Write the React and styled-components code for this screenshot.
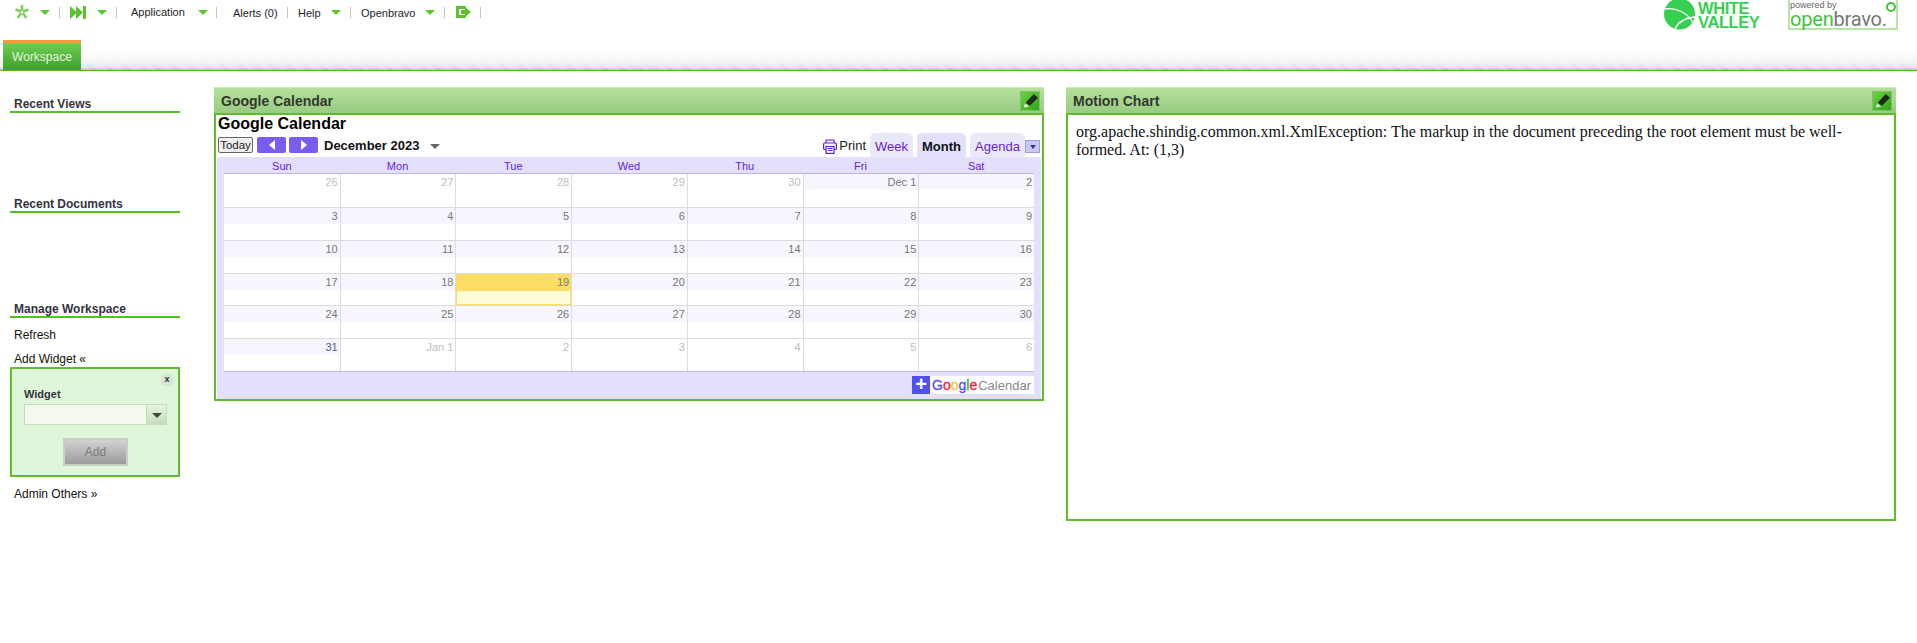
import styled, { createGlobalStyle } from "styled-components"

const GlobalStyle = createGlobalStyle`
    html, body {
        margin: 0;
        padding: 0;
        background: white;
        font-family: "Liberation Sans", Arial, sans-serif;
        font-size: 12px;
    }
`

const Page = styled.div`
    width: 1917px;
    height: 643px;
    overflow: hidden;
`

// top navigation
const Header = styled.div`
    height: 70px;
    position: relative;
    border-bottom: 1px solid #55bb2b;
`
const TopBar = styled.div`
    display: flex;
    align-items: center;
    height: 24px;
`
const MenuItem = styled.div`
    display: flex;
    align-items: center;
    height: 24px;
    width: ${props => props.$width}px;
    padding-left: ${props => props.$pad}px;
    box-sizing: border-box;
    color: #1e1e2a;
    font-size: 11px;
    flex: none;
`
const MenuLabel = styled.span`
    width: ${props => props.$width}px;
    flex: none;
    white-space: nowrap;
    position: relative;
    top: ${props => props.$raised ? "0" : "1px"};
`
const ArrowDown = styled.span`
    display: block;
    flex: none;
    margin-left: ${props => props.$gap}px;
    width: 0;
    height: 0;
    border-left: 5px solid transparent;
    border-right: 5px solid transparent;
    border-top: 5px solid #5bc52a;
`
const Sep = styled.span`
    width: 1px;
    height: 11px;
    background: #c4c4c4;
    flex: none;
`
const TabStrip = styled.div`
    position: absolute;
    left: 0;
    right: 0;
    bottom: 0;
    height: 30px;
    padding-left: 3px;
    box-sizing: border-box;
    display: flex;
    background:
        repeating-linear-gradient(45deg, rgba(255,255,255,.45) 0 1px, transparent 1px 2px),
        linear-gradient(to bottom, #ffffff 0%, #ffffff 40%, #f0f0f0 75%, #dcdcdc 92%, #a8a8a8 100%);
`
const Tab = styled.div`
    width: 78px;
    height: 30px;
    box-sizing: border-box;
    border-top: 4px solid #f59a3c;
    background: linear-gradient(to bottom, #6ccc52, #3f9e2c);
    color: #e6f7dd;
    font-size: 12px;
    line-height: 27px;
    text-align: center;
`
const Logos = styled.div`
    position: absolute;
    top: 0;
    left: 1664px;
    display: flex;
    gap: 29px;
`
const ValleyLogo = styled.div`
    display: flex;
    align-items: flex-start;
    gap: 3px;
    width: 95px;
    height: 30px;
`
const GlobeSvg = styled.svg`
    flex: none;
    display: block;
`
const ValleyText = styled.div`
    color: #36cf52;
    font-size: 16.5px;
    font-weight: bold;
    line-height: 14px;
    margin-top: 1px;
    letter-spacing: -.4px;
    white-space: nowrap;
`
const BravoBox = styled.div`
    width: 110px;
    height: 30px;
    box-sizing: border-box;
    border: 2px solid #b5e6a8;
    border-top: 0;
    position: relative;
`
const Powered = styled.div`
    font-size: 9px;
    color: #666;
    line-height: 10px;
`
const BravoWord = styled.div`
    font-family: Roboto, sans-serif;
    font-size: 20px;
    line-height: 18px;
    letter-spacing: -.2px;
    color: #777;
    white-space: nowrap;
`
const BravoGreen = styled.span`
    color: #3fc33f;
`
const BravoDot = styled.span`
    position: absolute;
    right: 0;
    top: 2px;
    width: 6px;
    height: 6px;
    border: 2px solid #3fc33f;
    border-radius: 50%;
`

// body
const Body = styled.div`
    display: flex;
`
const Sidebar = styled.div`
    width: 170px;
    margin-left: 10px;
    margin-right: 34px;
    padding-top: 26px;
    flex: none;
`
const SideSection = styled.div`
    height: ${props => props.$height ? props.$height + "px" : "auto"};
`
const SideHeading = styled.div`
    font-size: 12px;
    font-weight: bold;
    color: #33333d;
    line-height: 14px;
    padding-left: 4px;
    border-bottom: 2px solid #55bf26;
`
const SideLink = styled.div`
    font-size: 12px;
    color: #111;
    line-height: 14px;
    padding-left: 4px;
    margin-top: ${props => props.$top}px;
`
const AddBox = styled.div`
    height: 110px;
    margin-top: 1px;
    box-sizing: border-box;
    border: 2px solid #63bb2f;
    background: #e0f6db;
    position: relative;
    padding: 19px 11px 0 12px;
`
const CloseBtn = styled.div`
    position: absolute;
    top: 5px;
    right: 5px;
    width: 12px;
    height: 12px;
    border-radius: 3px;
    background: #d8e8d4;
    color: #333;
    font-size: 9px;
    font-weight: bold;
    line-height: 11px;
    text-align: center;
`
const FieldLabel = styled.div`
    font-size: 11px;
    font-weight: bold;
    color: #33333d;
    line-height: 13px;
`
const SelectBox = styled.div`
    display: flex;
    height: 21px;
    margin-top: 3px;
    box-sizing: border-box;
    border: 1px solid #c0dcb8;
    background: #f2f9ef;
`
const SelectFill = styled.div`
    flex: 1;
`
const SelectBtn = styled.div`
    width: 19px;
    border-left: 1px solid #c0dcb8;
    background: linear-gradient(to bottom, #e6f3e0, #c9dcbc);
    display: flex;
    align-items: center;
    justify-content: center;
`
const SelectArrow = styled.span`
    width: 0;
    height: 0;
    margin-top: 2px;
    border-left: 5px solid transparent;
    border-right: 5px solid transparent;
    border-top: 5px solid #3c4a38;
`
const AddBtn = styled.div`
    width: 65px;
    height: 28px;
    margin: 13px auto 0;
    box-sizing: border-box;
    border: 2px solid #c6cfc3;
    background: linear-gradient(to bottom, #d2d2d2, #9c9c9c);
    color: #7c7c7c;
    font-size: 12px;
    line-height: 24px;
    text-align: center;
`

const Main = styled.div`
    display: flex;
    gap: 22px;
    margin-top: 16px;
`
const Widget = styled.div`
    width: 830px;
    flex: none;
`
const WidgetHead = styled.div`
    height: 26px;
    box-sizing: border-box;
    background: linear-gradient(to bottom, #b4e09c, #99cb80);
    border-top: 1px solid #c9e8b8;
    display: flex;
    align-items: center;
    justify-content: space-between;
    padding: 0 4px 0 7px;
    color: #33382f;
    font-size: 14px;
    font-weight: bold;
`
const EditBtn = styled.div`
    width: 20px;
    height: 20px;
    box-sizing: border-box;
    border: 1px solid #85bd78;
    background: linear-gradient(135deg, #6fd148, #2fa810);
    display: flex;
    align-items: center;
    justify-content: center;
`
const WidgetBody = styled.div`
    height: ${props => props.$height}px;
    box-sizing: border-box;
    border: 2px solid #63bb2f;
    background: white;
`
const ErrorText = styled.div`
    font-family: "Liberation Serif", "Times New Roman", serif;
    font-size: 16px;
    line-height: 18px;
    color: #111;
    padding: 8px;
`

// calendar
const CalTitle = styled.div`
    font-size: 16px;
    font-weight: bold;
    color: #000;
    line-height: 17px;
    padding-left: 2px;
`
const CalNav = styled.div`
    display: flex;
    align-items: flex-end;
    height: 25px;
    padding: 0 2px 0 2px;
`
const TodayBtn = styled.div`
    width: 35px;
    height: 16px;
    box-sizing: border-box;
    border: 1px solid #666;
    border-radius: 2px;
    background: #f0f0f0;
    color: #222;
    font-size: 11.5px;
    line-height: 14px;
    text-align: center;
    margin-bottom: 4px;
`
const NavBtn = styled.div`
    width: 29px;
    height: 16px;
    border-radius: 2px;
    background: #7b5cf0;
    margin: 0 0 4px ${props => props.$left}px;
    display: flex;
    align-items: center;
    justify-content: center;
`
const NavArrow = styled.span`
    width: 0;
    height: 0;
    border-top: 5px solid transparent;
    border-bottom: 5px solid transparent;
    border-left: ${props => props.$right ? "6px solid #fff" : "0"};
    border-right: ${props => props.$right ? "0" : "6px solid #fff"};
`
const MonthLabel = styled.div`
    font-size: 13px;
    font-weight: bold;
    color: #111;
    margin: 0 0 3px 6px;
    line-height: 16px;
`
const MonthArrow = styled.span`
    width: 0;
    height: 0;
    margin: 0 0 8px 11px;
    border-left: 5px solid transparent;
    border-right: 5px solid transparent;
    border-top: 5px solid #666;
`
const NavRight = styled.div`
    margin-left: auto;
    display: flex;
    align-items: flex-end;
`
const PrintBtn = styled.div`
    display: flex;
    align-items: center;
    gap: 2px;
    color: #222;
    font-size: 13px;
    line-height: 16px;
    margin: 0 4px 3px 0;
`
const ViewTab = styled.div`
    height: 24px;
    box-sizing: border-box;
    width: ${props => props.$width}px;
    margin-left: ${props => props.$left}px;
    border-radius: 5px 5px 0 0;
    background: ${props => props.$active ? "#e3e0fd" : "#e9e9f8"};
    color: ${props => props.$active ? "#111" : "#6a1bd8"};
    font-weight: ${props => props.$active ? "bold" : "normal"};
    font-size: 13px;
    line-height: 28px;
    text-align: center;
`
const TabMenu = styled.div`
    width: 15px;
    height: 13px;
    box-sizing: border-box;
    margin: 0 0 4px 0;
    border: 1px solid #9c9ce0;
    background: #c8c8f4;
    display: flex;
    align-items: center;
    justify-content: center;
`
const TabMenuArrow = styled.span`
    width: 0;
    height: 0;
    border-left: 3px solid transparent;
    border-right: 3px solid transparent;
    border-top: 4px solid #3c2aa0;
`
const CalFrame = styled.div`
    margin-left: 1px;
    width: 824px;
    border-radius: 3px 3px 0 0;
    background: #e3e0fd;
    padding: 0 7px;
    box-sizing: border-box;
    height: 242px;
`
const DayNames = styled.div`
    display: grid;
    grid-template-columns: repeat(7, 1fr);
    height: 16px;
    border-bottom: 1px solid #bcb6f0;
`
const DayName = styled.div`
    text-align: center;
    font-size: 11px;
    line-height: 18px;
    color: #6a1bd8;
`
const Week = styled.div`
    display: grid;
    grid-template-columns: repeat(7, 1fr);
    height: ${props => props.$height}px;
    box-sizing: border-box;
    background: white;
    border-bottom: ${props => props.$last ? "1px solid #bcb6f0" : "1px solid #dcdcdc"};
`
const Cell = styled.div`
    border-left: ${props => props.$first ? "0" : "1px solid #dcdcdc"};
    background: ${props => props.$today ? "#fdfdd8" : "white"};
    box-shadow: ${props => props.$today ? "inset 0 0 0 1px #fadf64" : "none"};
`
const DateLabel = styled.div`
    height: ${props => props.$today ? 17 : 16}px;
    background: ${props => props.$today ? "#fadf64" : props.$out ? "transparent" : "#f7f6fe"};
    color: ${props => props.$out ? "#bdbdbd" : props.$blue ? "#4a5a9a" : "#777"};
    font-size: 11px;
    line-height: 16px;
    text-align: right;
    padding-right: 2px;
`
const CalFooter = styled.div`
    display: flex;
    justify-content: flex-end;
    padding-top: 4px;
`
const PlusSquare = styled.div`
    width: 18px;
    height: 18px;
    background: #5050f0;
    color: white;
    font-size: 20px;
    font-weight: bold;
    line-height: 17px;
    text-align: center;
`
const GoogleBadge = styled.div`
    width: 104px;
    height: 18px;
    background: white;
    font-size: 13px;
    line-height: 18px;
    color: #888;
    padding-left: 2px;
    box-sizing: border-box;
    white-space: nowrap;
`
const GoogleWord = styled.span`
    font-size: 14px;
    -webkit-text-stroke: .3px;
    margin-right: 1px;
`
const Letter = styled.span`
    color: ${props => props.$color};
`

const days = ["Sun", "Mon", "Tue", "Wed", "Thu", "Fri", "Sat"]

const weeks = [
    ["26", "27", "28", "29", "30", "Dec 1", "2"],
    ["3", "4", "5", "6", "7", "8", "9"],
    ["10", "11", "12", "13", "14", "15", "16"],
    ["17", "18", "19", "20", "21", "22", "23"],
    ["24", "25", "26", "27", "28", "29", "30"],
    ["31", "Jan 1", "2", "3", "4", "5", "6"],
]

const weekHeights = [34, 33, 33, 32, 33, 33]

function isOut(weekIdx, dayIdx) {
    if (weekIdx === 0) return dayIdx < 5
    if (weekIdx === 5) return dayIdx > 0
    return false
}

function PencilIcon() {
    return (
        <svg width="15" height="15" viewBox="0 0 14 14">
            <path d="M10 1 L14 4.5 L6.5 12 L2.5 9 Z" fill="#1f2a1a" />
            <path d="M2 9.8 L5.6 12.6 L0.8 13.6 Z" fill="#e8f5e0" />
        </svg>
    )
}

function StarIcon() {
    return (
        <svg width="14" height="14" viewBox="0 0 14 14" stroke="#7ad058" strokeWidth="2.5">
            <path d="M7 0 V6 M0.5 4.5 L6 6.5 M13.5 4.5 L8 6.5 M2.8 13 L6 8 M11.2 13 L8 8" fill="none" />
        </svg>
    )
}

function SkipIcon() {
    return (
        <svg width="16" height="13" viewBox="0 0 16 13" fill="#5ac22c">
            <path d="M0 0 L7 6.5 L0 13 Z M6 0 L13 6.5 L6 13 Z" />
            <rect x="13" y="0" width="3" height="13" />
        </svg>
    )
}

function ExitIcon() {
    return (
        <svg width="15" height="12" viewBox="0 0 15 12" fill="#5ac22c">
            <path d="M0 0 H10 V3 H3 V9 H10 V12 H0 Z" />
            <path d="M5 4 H9 V1 L15 6 L9 11 V8 H5 Z" />
        </svg>
    )
}

function GlobeIcon() {
    return (
        <GlobeSvg width="31" height="30" viewBox="0 0 31 30">
            <circle cx="15.5" cy="14" r="15.5" fill="#36cf52" />
            <path d="M1 9 C12 7 24 13 29 23 M11 29 C14 22 21 18 31 17" fill="none" stroke="white" strokeWidth="1.3" />
        </GlobeSvg>
    )
}

function PrintIcon() {
    return (
        <svg width="14" height="15" viewBox="0 0 14 15" fill="none" stroke="#5a22d8" strokeWidth="1.2">
            <path d="M3 4 V1 H11 V4" />
            <rect x="0.6" y="4" width="12.8" height="6.5" rx="1" />
            <rect x="3" y="7.5" width="8" height="6.9" fill="white" />
            <path d="M4.5 9.5 H9.5 M4.5 11.5 H9.5" />
        </svg>
    )
}

export default function App() {
    return <>
        <GlobalStyle />
        <Page>
            <Header>
                <TopBar>
                    <MenuItem $width={59} $pad={15}><StarIcon /><ArrowDown $gap={11} /></MenuItem>
                    <Sep />
                    <MenuItem $width={56} $pad={10}><SkipIcon /><ArrowDown $gap={11} /></MenuItem>
                    <Sep />
                    <MenuItem $width={99} $pad={14}><MenuLabel $width={67} $raised>Application</MenuLabel><ArrowDown $gap={0} /></MenuItem>
                    <Sep />
                    <MenuItem $width={70} $pad={16}><MenuLabel $width={44}>Alerts (0)</MenuLabel></MenuItem>
                    <Sep />
                    <MenuItem $width={62} $pad={10}><MenuLabel $width={33}>Help</MenuLabel><ArrowDown $gap={0} /></MenuItem>
                    <Sep />
                    <MenuItem $width={93} $pad={10}><MenuLabel $width={64}>Openbravo</MenuLabel><ArrowDown $gap={0} /></MenuItem>
                    <Sep />
                    <MenuItem $width={35} $pad={11}><ExitIcon /></MenuItem>
                    <Sep />
                </TopBar>
                <TabStrip>
                    <Tab>Workspace</Tab>
                </TabStrip>
                <Logos>
                    <ValleyLogo>
                        <GlobeIcon />
                        <ValleyText>WHITE<br />VALLEY</ValleyText>
                    </ValleyLogo>
                    <BravoBox>
                        <Powered>powered by</Powered>
                        <BravoWord><BravoGreen>open</BravoGreen>bravo.</BravoWord>
                        <BravoDot />
                    </BravoBox>
                </Logos>
            </Header>
            <Body>
                <Sidebar>
                    <SideSection $height={100}>
                        <SideHeading>Recent Views</SideHeading>
                    </SideSection>
                    <SideSection $height={105}>
                        <SideHeading>Recent Documents</SideHeading>
                    </SideSection>
                    <SideSection>
                        <SideHeading>Manage Workspace</SideHeading>
                        <SideLink $top={10}>Refresh</SideLink>
                        <SideLink $top={10}>Add Widget «</SideLink>
                        <AddBox>
                            <CloseBtn>x</CloseBtn>
                            <FieldLabel>Widget</FieldLabel>
                            <SelectBox>
                                <SelectFill />
                                <SelectBtn><SelectArrow /></SelectBtn>
                            </SelectBox>
                            <AddBtn>Add</AddBtn>
                        </AddBox>
                        <SideLink $top={10}>Admin Others »</SideLink>
                    </SideSection>
                </Sidebar>
                <Main>
                    <Widget>
                        <WidgetHead>
                            Google Calendar
                            <EditBtn><PencilIcon /></EditBtn>
                        </WidgetHead>
                        <WidgetBody $height={288}>
                            <CalTitle>Google Calendar</CalTitle>
                            <CalNav>
                                <TodayBtn>Today</TodayBtn>
                                <NavBtn $left={4}><NavArrow /></NavBtn>
                                <NavBtn $left={3}><NavArrow $right /></NavBtn>
                                <MonthLabel>December 2023</MonthLabel>
                                <MonthArrow />
                                <NavRight>
                                    <PrintBtn><PrintIcon />Print</PrintBtn>
                                    <ViewTab $width={43}>Week</ViewTab>
                                    <ViewTab $width={49} $left={4} $active>Month</ViewTab>
                                    <ViewTab $width={55} $left={4}>Agenda</ViewTab>
                                    <TabMenu><TabMenuArrow /></TabMenu>
                                </NavRight>
                            </CalNav>
                            <CalFrame>
                                <DayNames>
                                    {days.map(d => <DayName key={d}>{d}</DayName>)}
                                </DayNames>
                                {weeks.map((week, w) => (
                                    <Week key={w} $last={w === 5} $height={weekHeights[w]}>
                                        {week.map((label, d) => {
                                            const today = w === 3 && d === 2
                                            return (
                                                <Cell key={d} $first={d === 0} $today={today}>
                                                    <DateLabel $today={today} $out={isOut(w, d)} $blue={w === 5 && d === 0}>{label}</DateLabel>
                                                </Cell>
                                            )
                                        })}
                                    </Week>
                                ))}
                                <CalFooter>
                                    <PlusSquare>+</PlusSquare>
                                    <GoogleBadge>
                                        <GoogleWord>
                                            <Letter $color="#5050f0">G</Letter>
                                            <Letter $color="#f0203c">o</Letter>
                                            <Letter $color="#f5c518">o</Letter>
                                            <Letter $color="#5050f0">g</Letter>
                                            <Letter $color="#22b04c">l</Letter>
                                            <Letter $color="#f0203c">e</Letter>
                                        </GoogleWord>
                                        Calendar
                                    </GoogleBadge>
                                </CalFooter>
                            </CalFrame>
                        </WidgetBody>
                    </Widget>
                    <Widget>
                        <WidgetHead>
                            Motion Chart
                            <EditBtn><PencilIcon /></EditBtn>
                        </WidgetHead>
                        <WidgetBody $height={408}>
                            <ErrorText>org.apache.shindig.common.xml.XmlException: The markup in the document preceding the root element must be well-formed. At: (1,3)</ErrorText>
                        </WidgetBody>
                    </Widget>
                </Main>
            </Body>
        </Page>
    </>
}
